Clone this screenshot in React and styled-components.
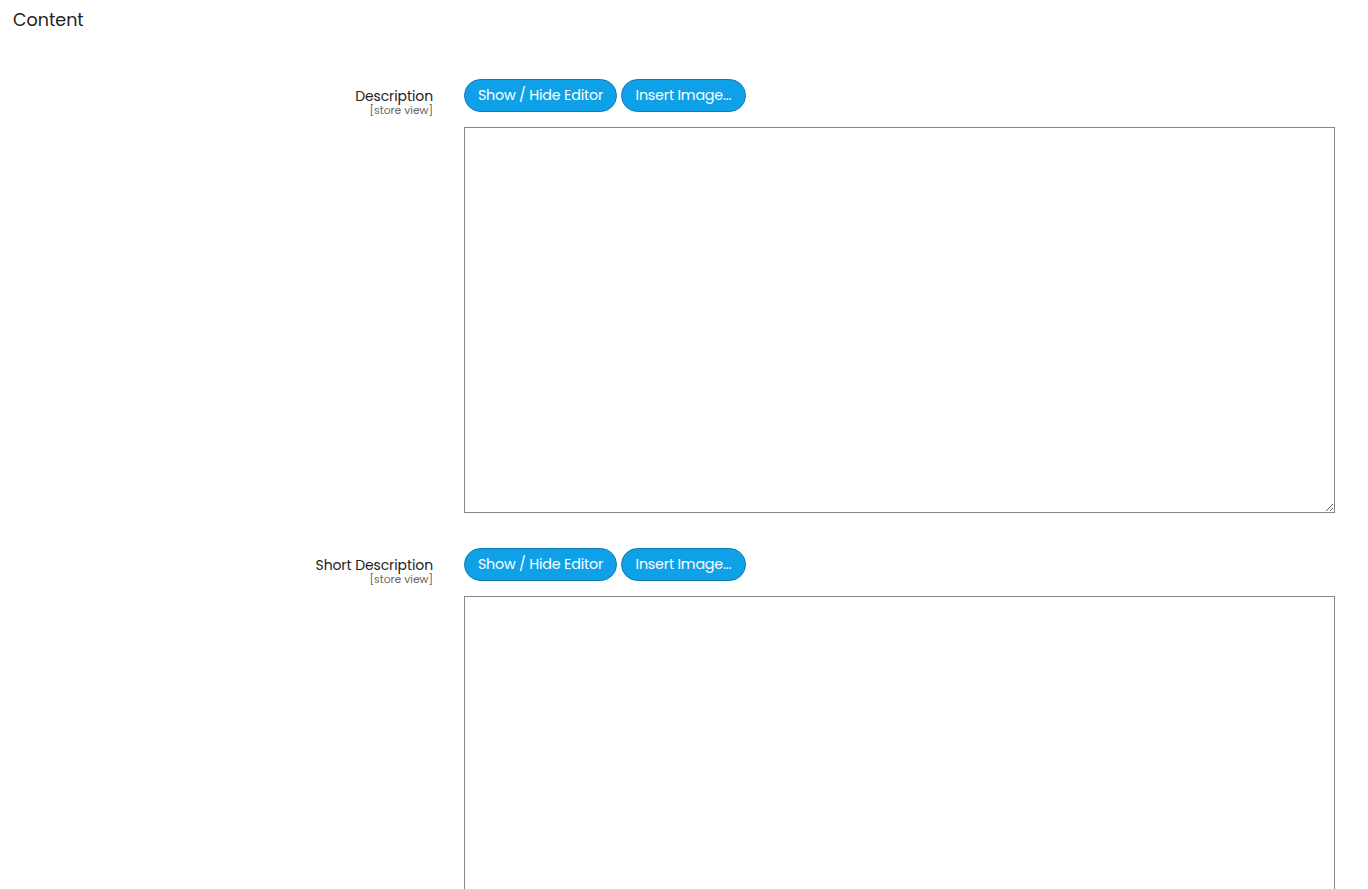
import React from "react";
import styled, { createGlobalStyle } from "styled-components";

const Global = createGlobalStyle`
  html, body { margin: 0; padding: 0; background: #fff; }
  body { font-family: "Poppins", "Inter", "Noto Sans", sans-serif; color: #222; }
`;

const Page = styled.div`
  padding: 9px 13px 0 13px;
`;

const Title = styled.h2`
  margin: 0;
  font-size: 17.5px;
  font-weight: 400;
  line-height: 22px;
  color: #222;
`;

const Fields = styled.div`
  display: flex;
  flex-direction: column;
  gap: 35px;
  margin-top: 48px;
`;

const Row = styled.div`
  display: grid;
  grid-template-columns: 420px 1fr;
  column-gap: 31px;
`;

const Label = styled.div`
  text-align: right;
  padding-top: 10px;
`;

const LabelText = styled.div`
  font-size: 14px;
  line-height: 15px;
  color: #222;
  letter-spacing: -0.1px;
`;

const Scope = styled.div`
  font-size: 10.8px;
  line-height: 12px;
  margin-top: 1px;
  color: #666;
`;

const Control = styled.div`
  display: flex;
  flex-direction: column;
  gap: 15px;
  padding-right: 20px;
`;

const Buttons = styled.div`
  display: flex;
  gap: 4px;
`;

const Button = styled.button`
  height: 33px;
  width: ${(p) => p.$w}px;
  padding: 0;
  border-radius: 17px;
  border: 1px solid #1079b0;
  background: #0ea1e8;
  color: #fff;
  font-family: inherit;
  font-size: 14.3px;
  letter-spacing: -0.2px;
  cursor: pointer;
`;

const Area = styled.textarea`
  display: block;
  box-sizing: border-box;
  width: 100%;
  height: ${(p) => p.$h}px;
  border: 1px solid #888;
  border-radius: 0;
  margin: 0;
  resize: vertical;
  font-family: inherit;
`;

function Field({ label, h }) {
  return (
    <Row>
      <Label>
        <LabelText>{label}</LabelText>
        <Scope>[store view]</Scope>
      </Label>
      <Control>
        <Buttons>
          <Button $w={153}>Show / Hide Editor</Button>
          <Button $w={125}>Insert Image...</Button>
        </Buttons>
        <Area $h={h} />
      </Control>
    </Row>
  );
}

export default function App() {
  return (
    <Page>
      <Global />
      <Title>Content</Title>
      <Fields>
        <Field label="Description" h={386} />
        <Field label="Short Description" h={386} />
      </Fields>
    </Page>
  );
}
